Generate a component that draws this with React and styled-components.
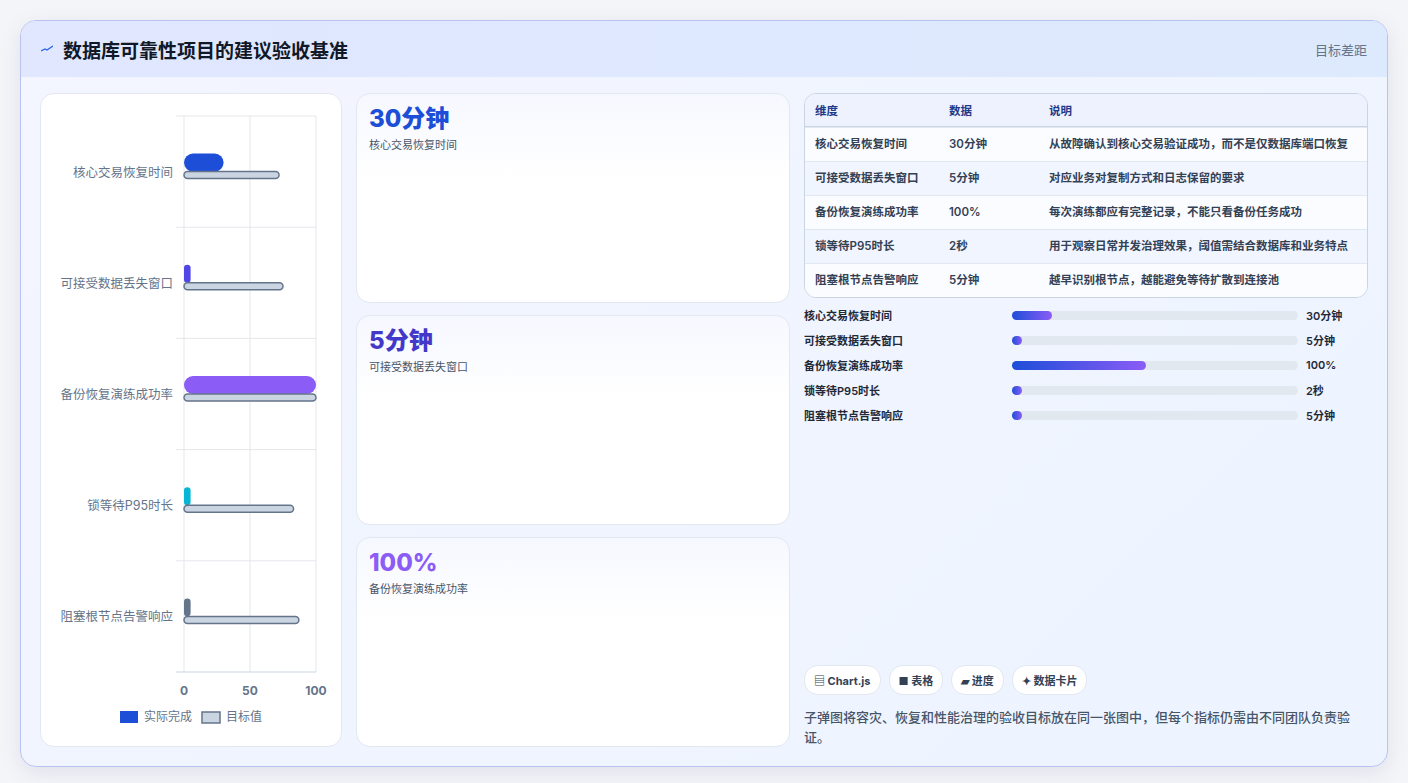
import styled, { createGlobalStyle } from 'styled-components';

const Global = createGlobalStyle`
  body { margin: 0; background: #f4f5f8; font-family: Inter, "Noto Sans CJK SC", sans-serif; }
`;

const cats = [
  { name: '核心交易恢复时间', v: 30, t: 72, c: '#1d4ed8', val: '30分钟', note: '从故障确认到核心交易验证成功，而不是仅数据库端口恢复' },
  { name: '可接受数据丢失窗口', v: 5, t: 75, c: '#4f46e5', val: '5分钟', note: '对应业务对复制方式和日志保留的要求' },
  { name: '备份恢复演练成功率', v: 100, t: 100, c: '#8b5cf6', val: '100%', note: '每次演练都应有完整记录，不能只看备份任务成功' },
  { name: '锁等待P95时长', v: 5, t: 83, c: '#06b6d4', val: '2秒', note: '用于观察日常并发治理效果，阈值需结合数据库和业务特点' },
  { name: '阻塞根节点告警响应', v: 5, t: 87, c: '#64748b', val: '5分钟', note: '越早识别根节点，越能避免等待扩散到连接池' },
];

const progress = [14, 3, 47, 3, 3];

const Frame = styled.div`
  margin: 20px;
  height: 745px;
  border: 1px solid #b9c3ee;
  border-radius: 16px;
  background: linear-gradient(135deg, #f3f5ff, #edf4ff);
  box-shadow: 0 6px 20px rgba(80, 90, 160, 0.12);
  overflow: hidden;
  display: flex;
  flex-direction: column;
`;
const Header = styled.div`
  height: 56px;
  flex: none;
  display: flex;
  align-items: center;
  justify-content: space-between;
  padding: 0 20px;
  background: linear-gradient(90deg, #e0e7ff, #dde9fd);
`;
const Title = styled.h1`
  margin: 0;
  font-size: 19px;
  font-weight: 700;
  color: #111827;
  display: flex;
  align-items: center;
  gap: 10px;
`;
const Side = styled.span`
  font-size: 13px;
  color: #64748b;
`;
const Body = styled.div`
  flex: 1;
  display: grid;
  grid-template-columns: 302px 434px 1fr;
  gap: 14px;
  padding: 16px 19px 19px 19px;
`;
const Panel = styled.div`
  background: #fff;
  border: 1px solid #e2e8f0;
  border-radius: 14px;
`;
const Stack = styled.div`
  display: flex;
  flex-direction: column;
  gap: 12px;
`;
const Stat = styled(Panel)`
  flex: 1;
  padding: 9px 12px;
  background: linear-gradient(180deg, #f6f8ff, #fff 40%);
`;
const Big = styled.div`
  font-size: 24px;
  font-weight: 800;
  color: ${(p) => p.$c};
  line-height: 32px;
`;
const Sub = styled.div`
  font-size: 11px;
  color: #475569;
  margin-top: 1px;
`;
const Right = styled.div`
  display: flex;
  flex-direction: column;
`;
const Table = styled.table`
  width: 100%;
  border-collapse: separate;
  border-spacing: 0;
  border: 1px solid #cbd5e1;
  border-radius: 12px;
  overflow: hidden;
  font-size: 11.5px;
  color: #334155;
  th { text-align: left; background: #eef2ff; color: #1e3a8a; font-weight: 700; padding: 8px 10px; border-bottom: 1px solid #cbd5e1; }
  td { padding: 8px 16px 8px 10px; line-height: 17px; border-top: 1px solid #e2e8f0; font-weight: 600; }
  tr:nth-child(even) td { background: #f1f5ff; }
  tr:nth-child(odd) td { background: #fbfcff; }
`;
const Bars = styled.div`
  padding: 8px 0;
  display: flex;
  flex-direction: column;
  gap: 7px;
`;
const BarRow = styled.div`
  display: grid;
  grid-template-columns: 200px 286px 1fr;
  gap: 8px;
  align-items: center;
  font-size: 11px;
  font-weight: 600;
  color: #1f2937;
  height: 18px;
`;
const Track = styled.div`
  height: 9px;
  border-radius: 5px;
  background: #e2e8f0;
`;
const Fill = styled.div`
  height: 100%;
  min-width: 10px;
  border-radius: 5px;
  background: linear-gradient(90deg, #1d4ed8, #8b5cf6);
`;
const Footer = styled.div`
  margin-top: auto;
`;
const Chips = styled.div`
  display: flex;
  gap: 8px;
`;
const Chip = styled.span`
  font-size: 11px;
  font-weight: 700;
  color: #334155;
  background: #fff;
  border: 1px solid #e2e8f0;
  border-radius: 14px;
  padding: 6px 9px;
`;
const Note = styled.p`
  margin: 12px 0 0;
  font-size: 13px;
  line-height: 20px;
  color: #475569;
  font-weight: 500;
`;

const Chart = () => {
  const x0 = 143, w = 132, top = 22, band = 111.2;
  const sx = (v) => x0 + (v / 100) * w;
  return (
    <svg width="300" height="650" style={{ display: 'block' }}>
      {[0, 50, 100].map((v) => (
        <line key={v} x1={sx(v)} x2={sx(v)} y1={top} y2={578} stroke="#e5e7eb" />
      ))}
      {cats.map((_, i) => (
        <line key={i} x1={x0 - 8} x2={sx(100)} y1={top + band * i} y2={top + band * i} stroke="#e5e7eb" />
      ))}
      <line x1={x0 - 8} x2={sx(100)} y1={578} y2={578} stroke="#cbd5e1" />
      {cats.map((c, i) => {
        const cy = top + band * i + band / 2;
        return (
          <g key={c.name}>
            <text x={132} y={cy + 5} textAnchor="end" fontSize="12.5" fill="#64748b">{c.name}</text>
            <rect x={x0} y={cy - 18} width={sx(c.v) - x0} height={18} rx={Math.min(9, (sx(c.v) - x0) / 2)} fill={c.c} />
            <rect x={x0} y={cy} width={sx(c.t) - x0} height={7} rx={3.5} fill="#cbd5e1" stroke="#64748b" strokeWidth="1.5" />
          </g>
        );
      })}
      {[0, 50, 100].map((v) => (
        <text key={v} x={sx(v)} y={601} textAnchor="middle" fontSize="12" fontWeight="700" fill="#64748b">{v}</text>
      ))}
      <rect x={79} y={617} width={18} height={12} fill="#1d4ed8" />
      <text x={103} y={627} fontSize="12" fill="#64748b">实际完成</text>
      <rect x={161} y={618} width={18} height={11} fill="#cbd5e1" stroke="#64748b" strokeWidth="1.5" />
      <text x={185} y={627} fontSize="12" fill="#64748b">目标值</text>
    </svg>
  );
};

export default function App() {
  return (
    <>
      <Global />
      <Frame>
        <Header>
          <Title>
            <svg width="12" height="8" viewBox="0 0 12 8"><path d="M0 6 L4 4 L6 5 L12 1" stroke="#2563eb" strokeWidth="1.3" fill="none" /></svg>
            数据库可靠性项目的建议验收基准
          </Title>
          <Side>目标差距</Side>
        </Header>
        <Body>
          <Panel><Chart /></Panel>
          <Stack>
            <Stat><Big $c="#1d4ed8">30分钟</Big><Sub>核心交易恢复时间</Sub></Stat>
            <Stat><Big $c="#4338ca">5分钟</Big><Sub>可接受数据丢失窗口</Sub></Stat>
            <Stat><Big $c="#8b5cf6">100%</Big><Sub>备份恢复演练成功率</Sub></Stat>
          </Stack>
          <Right>
            <Table>
              <thead><tr><th style={{ width: 114 }}>维度</th><th style={{ width: 80 }}>数据</th><th>说明</th></tr></thead>
              <tbody>
                {cats.map((c) => (
                  <tr key={c.name}><td>{c.name}</td><td>{c.val}</td><td>{c.note}</td></tr>
                ))}
              </tbody>
            </Table>
            <Bars>
              {cats.map((c, i) => (
                <BarRow key={c.name}>
                  <span>{c.name}</span>
                  <Track><Fill style={{ width: `${progress[i]}%` }} /></Track>
                  <span>{c.val}</span>
                </BarRow>
              ))}
            </Bars>
            <Footer>
              <Chips>
                <Chip>▤ Chart.js</Chip>
                <Chip>■ 表格</Chip>
                <Chip>▰ 进度</Chip>
                <Chip>✦ 数据卡片</Chip>
              </Chips>
              <Note>子弹图将容灾、恢复和性能治理的验收目标放在同一张图中，但每个指标仍需由不同团队负责验证。</Note>
            </Footer>
          </Right>
        </Body>
      </Frame>
    </>
  );
}
